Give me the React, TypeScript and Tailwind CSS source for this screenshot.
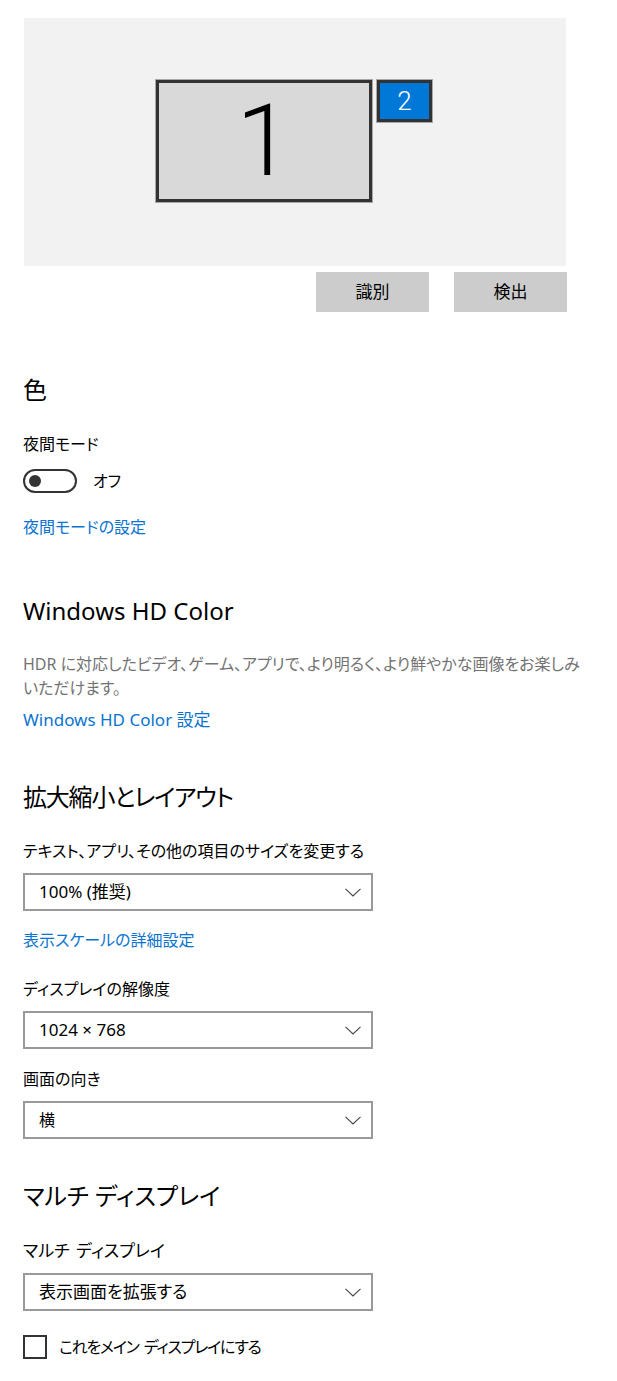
import React from "react";

const font = "[font-family:'Noto_Sans','Noto_Sans_CJK_JP',sans-serif] [font-feature-settings:'palt']";

function Chevron() {
  return (
    <svg width="16" height="9" viewBox="0 0 16 9" fill="none">
      <polyline points="0.5,0.8 8,8 15.5,0.8" stroke="#444" strokeWidth="1.1" />
    </svg>
  );
}

function Select({ value, size = "text-[17px]" }: { value: string; size?: string }) {
  return (
    <div className={`mt-[12px] flex h-[38px] w-[350px] items-center justify-between border-2 border-[#999] bg-white pl-[14px] pr-[10px] text-black ${size}`}>
      <span>{value}</span>
      <Chevron />
    </div>
  );
}

function Heading({ children, className = "" }: { children: React.ReactNode; className?: string }) {
  return <div className={`h-[30px] text-[24px] leading-[30px] text-black ${className}`}>{children}</div>;
}

function Label({ children, className = "" }: { children: React.ReactNode; className?: string }) {
  return <div className={`h-[20px] leading-[20px] text-black ${className}`}>{children}</div>;
}

function Link({ children, className = "" }: { children: React.ReactNode; className?: string }) {
  return <div className={`h-[20px] leading-[20px] text-[#0a74d0] ${className}`}>{children}</div>;
}

export default function App() {
  return (
    <div className={`min-h-[1381px] w-[617px] bg-white pl-[23px] ${font}`}>
      <div className="h-[18px]" />
      <div className="relative ml-px h-[248px] w-[542px] bg-[#f2f2f2]">
        <div className="absolute left-[132px] top-[62px] flex h-[122px] w-[216px] items-center justify-center border-[3px] border-[#333] bg-[#d9d9d9] ring-1 ring-[#a8a8a8]">
          <span className="[font-family:'Roboto','Noto_Sans',sans-serif] text-[100px] font-light leading-none text-black">1</span>
        </div>
        <div className="absolute left-[353px] top-[62px] flex h-[42px] w-[55px] items-center justify-center border-[3px] border-[#333] bg-[#0078d7] ring-1 ring-[#a8a8a8]">
          <span className="[font-family:'Roboto','Noto_Sans',sans-serif] text-[26px] font-light leading-none text-white">2</span>
        </div>
      </div>
      <div className="mt-[6px] flex w-[544px] justify-end gap-[25px]">
        <button className="flex h-[40px] w-[113px] items-center justify-center bg-[#cccccc] text-[17px] text-black">識別</button>
        <button className="flex h-[40px] w-[113px] items-center justify-center bg-[#cccccc] text-[17px] text-black">検出</button>
      </div>

      <Heading className="mt-[63px]">色</Heading>
      <Label className="mt-[29px] text-[16px]">夜間モード</Label>
      <div className="mt-[15px] flex items-center">
        <div className="flex h-[24px] w-[54px] items-center rounded-full border-2 border-[#333] pl-[4px]">
          <div className="h-[12px] w-[12px] rounded-full bg-[#333]" />
        </div>
        <span className="ml-[16px] text-[16px] leading-[20px] text-black">オフ</span>
      </div>
      <Link className="mt-[24px] text-[16px]">夜間モードの設定</Link>

      <Heading className="mt-[59px]">Windows HD Color</Heading>
      <div className="mt-[26px] text-[16px] leading-[24px] text-[#737373]">
        HDR に対応したビデオ、ゲーム、アプリで、より明るく、より鮮やかな画像をお楽しみ
        <br />
        いただけます。
      </div>
      <Link className="mt-[10px] text-[17px]">Windows HD Color 設定</Link>

      <Heading className="mt-[52px] tracking-[-1.2px]">拡大縮小とレイアウト</Heading>
      <Label className="mt-[29px] text-[16px]">テキスト、アプリ、その他の項目のサイズを変更する</Label>
      <Select value="100% (推奨)" />
      <Link className="mt-[19px] text-[16px]">表示スケールの詳細設定</Link>
      <Label className="mt-[29px] text-[16px]">ディスプレイの解像度</Label>
      <Select value="1024 × 768" />
      <Label className="mt-[20px] text-[16px]">画面の向き</Label>
      <Select value="横" size="text-[16px]" />

      <Heading className="mt-[42px]">マルチ ディスプレイ</Heading>
      <Label className="mt-[30px] text-[17px] [word-spacing:2px]">マルチ ディスプレイ</Label>
      <Select value="表示画面を拡張する" size="text-[17px]" />
      <div className="mt-[24px] flex items-center">
        <div className="h-[24px] w-[24px] border-2 border-[#333] bg-white" />
        <span className="ml-[12px] text-[16px] leading-[20px] tracking-[-1.2px] text-black [word-spacing:2px]">これをメイン ディスプレイにする</span>
      </div>
    </div>
  );
}
